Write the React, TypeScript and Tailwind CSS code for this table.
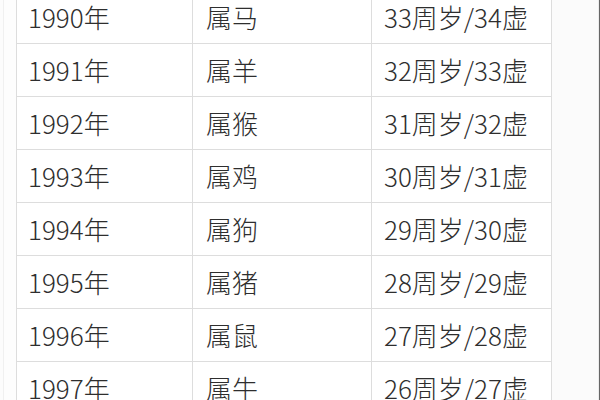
import React from "react";

const rows = [
  ["1990年", "属马", "33周岁/34虚"],
  ["1991年", "属羊", "32周岁/33虚"],
  ["1992年", "属猴", "31周岁/32虚"],
  ["1993年", "属鸡", "30周岁/31虚"],
  ["1994年", "属狗", "29周岁/30虚"],
  ["1995年", "属猪", "28周岁/29虚"],
  ["1996年", "属鼠", "27周岁/28虚"],
  ["1997年", "属牛", "26周岁/27虚"],
];

export default function App() {
  return (
    <div
      className="w-[600px] h-[400px] overflow-hidden bg-white flex text-[#2e2e2e] font-light"
      style={{ fontFamily: '"Noto Sans CJK SC", "Noto Sans", sans-serif' }}
    >
      <div className="w-[16px] shrink-0 flex">
        <div className="w-[3px] bg-[#fcfcfc]" />
        <div className="w-px bg-[#f0f0f0]" />
        <div className="flex-1 bg-[#fdfdfd]" />
      </div>
      <div className="w-[536px] shrink-0 border-l border-r border-[#dddddd] mt-[-9px]">
        {rows.map((r) => (
          <div key={r[0]} className="flex h-[53px] border-b border-[#dddddd]">
            <div className="w-[175px] shrink-0 flex items-center pl-[11px] text-[26px] leading-none">
              {r[0]}
            </div>
            <div className="w-[179px] shrink-0 border-l border-[#dddddd] flex items-center pl-[13px] text-[26px] leading-none">
              {r[1]}
            </div>
            <div className="flex-1 border-l border-[#dddddd] flex items-center pl-[12px] text-[26px] leading-none">
              {r[2]}
            </div>
          </div>
        ))}
      </div>
      <div className="flex-1 bg-[#fbfbfb]" />
      <div className="w-px bg-[#ececec]" />
      <div className="w-px bg-[#666666]" />
    </div>
  );
}
